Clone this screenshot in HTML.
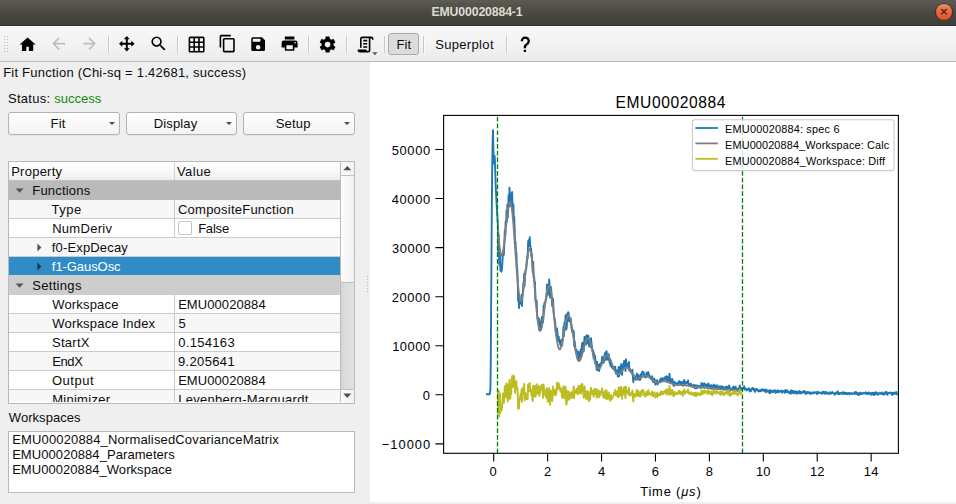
<!DOCTYPE html><html><head><meta charset="utf-8"><title>EMU00020884-1</title><style>
html,body{margin:0;padding:0;}
body{width:956px;height:504px;overflow:hidden;background:#efefef;font-family:"Liberation Sans",sans-serif;position:relative;}
.abs,.t,.ic,.sep{position:absolute;}
.t{white-space:nowrap;line-height:1;}
.t i{font-style:italic;}
#titlebar{left:0;top:0;width:956px;height:25px;background:linear-gradient(#5d5b52,#4b4a44 45%,#3f3e3a);border-bottom:1px solid #33322f;}
#toolbar{left:0;top:26px;width:956px;height:34px;background:linear-gradient(#f7f7f7,#f3f3f3 50%,#ebebeb);border-top:1px solid #ffffff;border-bottom:1px solid #bbbbbb;}
.sep{top:36px;width:1px;height:17px;background:#c9c9c9;box-shadow:1px 0 0 #fafafa;}
#canvas{left:370px;top:62px;width:586px;height:440px;background:#fff;}
.btn{height:21px;border:1px solid #b4b4b4;border-radius:3px;background:linear-gradient(#ffffff,#f3f3f3);box-shadow:0 1px 0 rgba(0,0,0,0.04);}
.darr{width:0;height:0;border-left:3px solid transparent;border-right:3px solid transparent;border-top:3.5px solid #4d4d4d;}
.row{left:9px;width:331px;height:18px;border-bottom:1px solid #cbcbcb;}
</style></head><body>
<div class="abs" id="titlebar"></div>
<div class="abs" style="left:0;top:0;width:1px;height:1px;background:#3b5168;"></div><div class="abs" style="left:955px;top:0;width:1px;height:1px;background:#6a6a66;"></div>
<div class="abs" style="left:935px;top:3px;width:18px;height:18px;border-radius:9px;background:#3a3833;"></div>
<div class="abs" style="left:936px;top:4px;width:16px;height:16px;border-radius:8px;background:linear-gradient(#f28c66,#e9653a 50%,#e0551f);"></div>
<svg class="abs" style="left:936px;top:4px" width="16" height="16" viewBox="0 0 16 16"><path d="M5.3 5.0L10.7 10.4M10.7 5.0L5.3 10.4" stroke="#3a2417" stroke-width="1.25" stroke-linecap="butt"/></svg>
<div class="abs" id="toolbar"></div>
<div class="abs" style="left:4px;top:36px;width:1px;height:17px;background:repeating-linear-gradient(to bottom,#b9b9b9 0 1px,transparent 1px 3px);"></div>
<div class="abs" style="left:7px;top:36px;width:1px;height:17px;background:repeating-linear-gradient(to bottom,#b9b9b9 0 1px,transparent 1px 3px);"></div>
<svg class="ic" style="left:17.60px;top:34.50px" width="19.2" height="19.2" viewBox="0 0 24 24"><path fill="#000" d="M10.4,20V14.6H13.6V20H19V12H22L12,3L2,12H5V20H10.4Z"/></svg>
<svg class="ic" style="left:48.60px;top:34.30px" width="19.2" height="19.2" viewBox="0 0 24 24"><path fill="#bdbdbd" d="M20,11V13H8L13.5,18.5L12.08,19.92L4.16,12L12.08,4.08L13.5,5.5L8,11H20Z"/></svg>
<svg class="ic" style="left:79.60px;top:34.30px" width="19.2" height="19.2" viewBox="0 0 24 24"><path fill="#bdbdbd" d="M4,11V13H16L10.5,18.5L11.92,19.92L19.84,12L11.92,4.08L10.5,5.5L16,11H4Z"/></svg>
<div class="sep" style="left:108.0px"></div>
<svg class="ic" style="left:119.20px;top:36.10px" width="15.6" height="15.6" viewBox="0 0 16 16"><path fill="#000" d="M8,0L11,3.4H9V7H12.6V5L16,8L12.6,11V9H9V12.6H11L8,16L5,12.6H7V9H3.4V11L0,8L3.4,5V7H7V3.4H5Z"/></svg>
<svg class="ic" style="left:148.60px;top:34.30px" width="19.2" height="19.2" viewBox="0 0 24 24"><path fill="#000" d="M9.5,3A6.5,6.5 0 0,1 16,9.5C16,11.11 15.41,12.59 14.44,13.73L14.71,14H15.5L20.5,19L19,20.5L14,15.5V14.71L13.73,14.44C12.59,15.41 11.11,16 9.5,16A6.5,6.5 0 0,1 3,9.5A6.5,6.5 0 0,1 9.5,3M9.5,5C7,5 5,7 5,9.5C5,12 7,14 9.5,14C12,14 14,12 14,9.5C14,7 12,5 9.5,5Z"/></svg>
<div class="sep" style="left:177.0px"></div>
<svg class="ic" style="left:186.60px;top:34.60px" width="19.2" height="19.2" viewBox="0 0 24 24"><path fill="#000" d="M10,4V8H14V4H10M16,4V8H20V4H16M16,10V14H20V10H16M16,16V20H20V16H16M14,20V16H10V20H14M8,20V16H4V20H8M8,14V10H4V14H8M8,8V4H4V8H8M10,14H14V10H10V14M4,2H20A2,2 0 0,1 22,4V20A2,2 0 0,1 20,22H4C2.92,22 2,21.1 2,20V4A2,2 0 0,1 4,2Z"/></svg>
<svg class="ic" style="left:217.60px;top:34.30px" width="19.2" height="19.2" viewBox="0 0 24 24"><path fill="#000" d="M19,21H8V7H19M19,5H8A2,2 0 0,0 6,7V21A2,2 0 0,0 8,23H19A2,2 0 0,0 21,21V7A2,2 0 0,0 19,5M16,1H4A2,2 0 0,0 2,3V17H4V3H16V1Z"/></svg>
<svg class="ic" style="left:249.05px;top:35.25px" width="18.3" height="18.3" viewBox="0 0 24 24"><path fill="#000" d="M15,9H5V5H15M12,19A3,3 0 0,1 9,16A3,3 0 0,1 12,13A3,3 0 0,1 15,16A3,3 0 0,1 12,19M17,3H5C3.89,3 3,3.9 3,5V19A2,2 0 0,0 5,21H19A2,2 0 0,0 21,19V7L17,3Z"/></svg>
<svg class="ic" style="left:279.60px;top:34.40px" width="19.2" height="19.2" viewBox="0 0 24 24"><path fill="#000" d="M18,3H6V7H18M19,12A1,1 0 0,1 18,11A1,1 0 0,1 19,10A1,1 0 0,1 20,11A1,1 0 0,1 19,12M16,19H8V14H16M19,8H5A3,3 0 0,0 2,11V17H6V21H18V17H22V11A3,3 0 0,0 19,8Z"/></svg>
<div class="sep" style="left:308.0px"></div>
<svg class="ic" style="left:317.60px;top:34.50px" width="19.2" height="19.2" viewBox="0 0 24 24"><path fill="#000" d="M12,15.5A3.5,3.5 0 0,1 8.5,12A3.5,3.5 0 0,1 12,8.5A3.5,3.5 0 0,1 15.5,12A3.5,3.5 0 0,1 12,15.5M19.43,12.97C19.47,12.65 19.5,12.33 19.5,12C19.5,11.67 19.47,11.34 19.43,11L21.54,9.37C21.73,9.22 21.78,8.95 21.66,8.73L19.66,5.27C19.54,5.05 19.27,4.96 19.05,5.05L16.56,6.05C16.04,5.66 15.5,5.32 14.87,5.07L14.5,2.42C14.46,2.18 14.25,2 14,2H10C9.75,2 9.54,2.18 9.5,2.42L9.13,5.07C8.5,5.32 7.96,5.66 7.44,6.05L4.95,5.05C4.73,4.96 4.46,5.05 4.34,5.27L2.34,8.73C2.21,8.95 2.27,9.22 2.46,9.37L4.57,11C4.53,11.34 4.5,11.67 4.5,12C4.5,12.33 4.53,12.65 4.57,12.97L2.46,14.63C2.27,14.78 2.21,15.05 2.34,15.27L4.34,18.73C4.46,18.95 4.73,19.03 4.95,18.95L7.44,17.94C7.96,18.34 8.5,18.68 9.13,18.93L9.5,21.58C9.54,21.82 9.75,22 10,22H14C14.25,22 14.46,21.82 14.5,21.58L14.87,18.93C15.5,18.67 16.04,18.34 16.56,17.94L19.05,18.95C19.27,19.03 19.54,18.95 19.66,18.73L21.66,15.27C21.78,15.05 21.73,14.78 21.54,14.63L19.43,12.97Z"/></svg>
<div class="sep" style="left:346.0px"></div>
<svg class="ic" style="left:355.60px;top:34.60px" width="19.2" height="19.2" viewBox="0 0 24 24"><path fill="#000" d="M15,20A1,1 0 0,0 16,19V4H8A1,1 0 0,0 7,5V16H5V5A3,3 0 0,1 8,2H19A3,3 0 0,1 22,5V6H20V5A1,1 0 0,0 19,4A1,1 0 0,0 18,5V9L18,19A3,3 0 0,1 15,22H5A3,3 0 0,1 2,19V18H13A2,2 0 0,0 15,20M9,6H14V8H9V6M9,10H14V12H9V10M9,14H14V16H9V14Z"/></svg>
<svg class="abs" style="left:372px;top:52px" width="6" height="4" viewBox="0 0 6 4"><path d="M0.2 0.3H5.6L2.9 3.3Z" fill="#5a5a5a"/></svg>
<div class="sep" style="left:384.0px"></div>
<div class="abs" style="left:388px;top:33px;width:29px;height:20px;border:1px solid #aaaaaa;border-radius:3px;background:#dcdcdc;"></div>
<div class="sep" style="left:423.0px"></div>
<div class="sep" style="left:506.0px"></div>
<svg class="ic" style="left:515.80px;top:34.90px" width="18.6" height="18.6" viewBox="0 0 24 24"><path fill="#000" d="M10,19H13V22H10V19M12,2C17.35,2.22 19.68,7.62 16.5,11.67C15.67,12.67 14.33,13.33 13.67,14.17C13,15 13,16 13,17H10C10,15.33 10,13.92 10.67,12.92C11.33,11.92 12.67,11.33 13.5,10.67C15.92,8.43 15.32,5.26 12,5A3,3 0 0,0 9,8H6A6,6 0 0,1 12,2Z"/></svg>
<div class="abs" id="canvas"></div>
<div class="abs" style="left:367px;top:276px;width:1px;height:17px;background:repeating-linear-gradient(to bottom,#bdbdbd 0 1px,transparent 1px 3px);"></div>
<div class="abs btn" style="left:8px;top:112px;width:110px;"></div>
<div class="abs darr" style="left:109.3px;top:121.5px;"></div>
<div class="abs btn" style="left:126px;top:112px;width:109px;"></div>
<div class="abs darr" style="left:225.8px;top:121.5px;"></div>
<div class="abs btn" style="left:243px;top:112px;width:110px;"></div>
<div class="abs darr" style="left:343.9px;top:121.5px;"></div>
<div class="abs" style="left:8px;top:161px;width:345px;height:241px;border:1px solid #b9b9b9;background:#fff;"></div>
<div class="abs" style="left:9px;top:162px;width:331px;height:18px;background:linear-gradient(#ffffff,#f9f9f9 50%,#eeeeee);border-bottom:1px solid #c2c2c2;"></div>
<div class="abs" style="left:174px;top:162px;width:1px;height:18px;background:#d3d3d3;"></div>
<div class="abs row" style="top:181px;background:#bababa;height:18px;border-bottom-color:#bababa;"></div>
<div class="abs row" style="top:200px;background:#f7f7f7;height:18px;"></div>
<div class="abs" style="left:174px;top:200px;width:1px;height:18px;background:#cbcbcb;"></div>
<div class="abs row" style="top:219px;background:#ffffff;height:18px;"></div>
<div class="abs" style="left:174px;top:219px;width:1px;height:18px;background:#cbcbcb;"></div>
<div class="abs row" style="top:238px;background:#f7f7f7;height:18px;"></div>
<div class="abs row" style="top:257px;background:#308cc6;height:18px;border-bottom-color:#cdcdcd;"></div>
<div class="abs row" style="top:276px;background:#cdcdcd;height:18px;border-bottom-color:#cdcdcd;"></div>
<div class="abs row" style="top:295px;background:#ffffff;height:18px;"></div>
<div class="abs" style="left:174px;top:295px;width:1px;height:18px;background:#cbcbcb;"></div>
<div class="abs row" style="top:314px;background:#f7f7f7;height:18px;"></div>
<div class="abs" style="left:174px;top:314px;width:1px;height:18px;background:#cbcbcb;"></div>
<div class="abs row" style="top:333px;background:#ffffff;height:18px;"></div>
<div class="abs" style="left:174px;top:333px;width:1px;height:18px;background:#cbcbcb;"></div>
<div class="abs row" style="top:352px;background:#f7f7f7;height:18px;"></div>
<div class="abs" style="left:174px;top:352px;width:1px;height:18px;background:#cbcbcb;"></div>
<div class="abs row" style="top:371px;background:#ffffff;height:18px;"></div>
<div class="abs" style="left:174px;top:371px;width:1px;height:18px;background:#cbcbcb;"></div>
<div class="abs row" style="top:390px;background:#f7f7f7;height:12px;border-bottom:none;"></div>
<div class="abs" style="left:174px;top:390px;width:1px;height:12px;background:#cbcbcb;"></div>
<svg class="abs" style="left:15px;top:187px" width="10" height="8" viewBox="0 0 10 8"><path d="M0.6 1.4H8.6L4.6 5.8Z" fill="#555"/></svg>
<svg class="abs" style="left:15px;top:282px" width="10" height="8" viewBox="0 0 10 8"><path d="M0.6 1.4H8.6L4.6 5.8Z" fill="#555"/></svg>
<svg class="abs" style="left:36px;top:243px" width="8" height="10" viewBox="0 0 8 10"><path d="M1.4 0.5V8.5L5.4 4.5Z" fill="#555"/></svg>
<svg class="abs" style="left:36px;top:262px" width="8" height="10" viewBox="0 0 8 10"><path d="M1.4 0.5V8.5L5.4 4.5Z" fill="#1e3548"/></svg>
<div class="abs" style="left:178px;top:221px;width:12px;height:12px;border:1px solid #c3c3c3;border-radius:2px;background:#fff;"></div>
<div class="abs" style="left:340px;top:162px;width:1px;height:240px;background:#bdbdbd;"></div>
<div class="abs" style="left:341px;top:162px;width:13px;height:13px;background:linear-gradient(to right,#fafafa,#f2f2f2);border-bottom:1px solid #c0c0c0;"></div>
<div class="abs" style="left:341px;top:176px;width:13px;height:106px;background:linear-gradient(to right,#fdfdfd,#f1f1f1);border-bottom:1px solid #bdbdbd;"></div>
<div class="abs" style="left:341px;top:283px;width:13px;height:106px;background:linear-gradient(to right,#d2d2d2,#dedede 30%,#e0e0e0);"></div>
<div class="abs" style="left:341px;top:389px;width:13px;height:13px;background:linear-gradient(to right,#fafafa,#f2f2f2);border-top:1px solid #c0c0c0;"></div>
<svg class="abs" style="left:343px;top:165px" width="9" height="6" viewBox="0 0 9 6"><path d="M0.3 5.2H8.3L4.3 0.9Z" fill="#505050"/></svg>
<svg class="abs" style="left:343px;top:393px" width="9" height="6" viewBox="0 0 9 6"><path d="M0.3 0.6H8.3L4.3 4.9Z" fill="#505050"/></svg>
<div class="abs" style="left:8px;top:431px;width:345px;height:60px;border:1px solid #b9b9b9;background:#fff;"></div>
<svg class="abs" style="left:370px;top:62px" width="586" height="440" viewBox="370 62 586 440">
<defs><clipPath id="ax"><rect x="443.6" y="115.4" width="454.8" height="337.9"/></clipPath></defs>
<g clip-path="url(#ax)" fill="none" stroke-linejoin="round">
<path d="M486.0 394.3 L489.6 394.2 L490.4 390.0 L490.8 360.0 L491.1 310.0 L491.6 240.0 L492.1 175.0 L492.6 142.0 L493.0 130.1 L493.4 150.0 L493.7 163.5 L493.9 156.0 L494.3 155.3 L494.8 157.2 L495.2 170.0 L495.7 186.0 L496.4 200.0 L497.1 213.0 L497.9 224.9 L498.3 252.2 L498.7 234.4 L499.2 264.7 L499.6 259.2 L500.0 249.3 L500.4 270.5 L500.9 268.2 L501.3 271.5 L501.7 270.6 L502.2 265.6 L502.6 259.1 L503.0 250.6 L503.5 255.2 L503.9 254.5 L504.3 244.1 L504.8 230.5 L505.2 236.7 L505.6 221.4 L506.1 225.2 L506.5 210.4 L506.9 221.4 L507.3 204.7 L507.8 217.6 L508.2 210.4 L508.6 194.9 L509.1 204.0 L509.5 187.6 L509.9 206.2 L510.4 205.7 L510.8 194.4 L511.2 204.0 L511.7 192.5 L512.1 192.0 L512.5 206.3 L513.0 211.1 L513.4 204.4 L513.8 219.3 L514.2 216.6 L514.7 230.5 L515.1 245.3 L515.5 241.5 L516.0 252.1 L516.4 252.1 L516.8 265.2 L517.3 269.8 L517.7 279.7 L518.1 300.8 L518.6 295.0 L519.0 308.0 L519.4 301.5 L519.9 304.2 L520.3 301.6 L520.7 300.2 L521.1 301.5 L521.6 294.8 L522.0 306.0 L522.4 295.0 L522.9 292.9 L523.3 283.5 L523.7 285.0 L524.2 273.6 L524.6 285.9 L525.0 276.5 L525.5 270.5 L525.9 269.8 L526.3 268.7 L526.8 262.8 L527.2 257.1 L527.6 259.0 L528.1 242.2 L528.5 240.2 L528.9 246.0 L529.3 243.4 L529.8 237.1 L530.2 244.9 L530.6 247.9 L531.1 248.5 L531.5 256.4 L531.9 253.7 L532.4 267.0 L532.8 272.8 L533.2 262.0 L533.7 277.3 L534.1 276.3 L534.5 281.1 L535.0 282.6 L535.4 298.5 L535.8 302.5 L536.2 304.4 L536.7 300.7 L537.1 314.2 L537.5 318.1 L538.0 317.9 L538.4 322.7 L538.8 318.5 L539.3 330.4 L539.7 322.2 L540.1 329.0 L540.6 325.8 L541.0 323.2 L541.4 319.8 L541.9 316.9 L542.3 318.7 L542.7 317.3 L543.1 322.1 L543.6 305.8 L544.0 307.2 L544.4 303.1 L544.9 302.7 L545.3 302.9 L545.7 300.1 L546.2 298.8 L546.6 296.6 L547.0 284.4 L547.5 293.3 L547.9 294.9 L548.3 288.0 L548.8 288.5 L549.2 279.5 L549.6 286.5 L550.1 297.6 L550.5 287.3 L550.9 286.9 L551.3 290.7 L551.8 299.2 L552.2 306.0 L552.6 305.4 L553.1 298.7 L553.5 309.0 L553.9 314.9 L554.4 318.5 L554.8 319.3 L555.2 322.1 L555.7 331.6 L556.1 333.2 L556.5 335.8 L557.0 328.5 L557.4 332.3 L557.8 336.6 L558.2 341.1 L558.7 336.7 L559.1 340.1 L559.5 340.2 L560.0 343.8 L560.4 345.0 L560.8 344.6 L561.3 340.0 L561.7 344.4 L562.1 345.6 L562.6 339.2 L563.0 337.2 L563.4 327.0 L563.9 336.2 L564.3 322.9 L564.7 330.5 L565.1 323.6 L565.6 315.1 L566.0 326.8 L566.4 329.3 L566.9 325.5 L567.3 313.4 L567.7 316.5 L568.2 312.1 L568.6 313.0 L569.0 321.1 L569.5 318.1 L569.9 321.6 L570.3 319.7 L570.8 318.5 L571.2 324.9 L571.6 328.6 L572.1 331.2 L572.5 332.5 L572.9 330.1 L573.3 334.1 L573.8 331.1 L574.2 345.9 L574.6 340.9 L575.1 345.3 L575.5 348.4 L575.9 351.0 L576.4 349.9 L576.8 350.4 L577.2 353.1 L577.7 358.8 L578.1 359.6 L578.5 351.9 L579.0 359.4 L579.4 356.5 L579.8 354.9 L580.2 352.4 L580.7 349.5 L581.1 356.6 L581.5 350.3 L582.0 344.2 L582.4 342.6 L582.8 345.8 L583.3 347.5 L583.7 351.2 L584.1 343.0 L584.6 336.7 L585.0 344.1 L585.4 341.2 L585.9 344.8 L586.3 339.2 L586.7 335.3 L587.1 342.7 L587.6 341.4 L588.0 343.2 L588.4 335.7 L588.9 345.7 L589.3 339.4 L589.7 344.7 L590.2 347.0 L590.6 339.1 L591.0 338.2 L591.5 343.5 L591.9 345.8 L592.3 349.9 L592.8 352.2 L593.2 350.4 L593.6 358.4 L594.0 353.2 L594.5 359.0 L594.9 355.4 L595.3 358.5 L595.8 364.2 L596.2 361.8 L596.6 369.6 L597.1 361.9 L597.5 370.2 L597.9 365.5 L598.4 368.4 L598.8 364.8 L599.2 371.0 L599.7 364.3 L600.1 367.9 L600.5 363.8 L601.0 362.9 L601.4 362.8 L601.8 360.6 L602.2 356.6 L602.7 363.1 L603.1 359.5 L603.5 362.7 L604.0 362.2 L604.4 355.6 L604.8 354.7 L605.3 352.5 L605.7 359.8 L606.1 359.8 L606.6 351.2 L607.0 359.6 L607.4 355.1 L607.9 354.4 L608.3 359.5 L608.7 354.2 L609.1 358.0 L609.6 362.8 L610.0 360.5 L610.4 365.7 L610.9 361.0 L611.3 364.8 L611.7 367.3 L612.2 367.7 L612.6 367.6 L613.0 368.7 L613.5 368.3 L613.9 366.9 L614.3 367.4 L614.8 370.3 L615.2 366.7 L615.6 371.7 L616.0 373.7 L616.5 373.0 L616.9 370.5 L617.3 371.6 L617.8 376.6 L618.2 375.3 L618.6 366.9 L619.1 376.1 L619.5 366.9 L619.9 373.5 L620.4 373.5 L620.8 368.8 L621.2 364.1 L621.7 370.1 L622.1 374.9 L622.5 365.2 L623.0 369.8 L623.4 363.1 L623.8 364.7 L624.2 360.7 L624.7 366.9 L625.1 367.5 L625.5 371.0 L626.0 359.3 L626.4 365.0 L626.8 363.3 L627.3 364.0 L627.7 366.7 L628.1 366.4 L628.6 365.0 L629.0 362.0 L629.4 370.4 L629.9 368.7 L630.3 370.5 L630.7 371.9 L631.1 370.8 L631.6 370.8 L632.0 373.3 L632.4 369.7 L632.9 377.4 L633.3 382.0 L633.7 374.9 L634.2 376.4 L634.6 376.5 L635.0 376.8 L635.5 379.8 L635.9 379.4 L636.3 376.8 L636.8 373.4 L637.2 378.6 L637.6 379.4 L638.0 377.3 L638.5 374.9 L638.9 379.7 L639.3 377.7 L639.8 377.3 L640.2 379.8 L640.6 375.1 L641.1 373.9 L641.5 377.9 L641.9 373.7 L642.4 371.5 L642.8 372.1 L643.2 372.2 L643.7 372.4 L644.1 376.3 L644.5 374.6 L644.9 377.4 L645.4 375.6 L645.8 377.4 L646.2 374.9 L646.7 372.5 L647.1 375.1 L647.5 374.6 L648.0 376.9 L648.4 372.3 L648.8 375.0 L649.3 375.2 L649.7 376.6 L650.1 376.9 L650.6 377.9 L651.0 379.3 L651.4 378.6 L651.9 376.1 L652.3 379.6 L652.7 378.0 L653.1 382.2 L653.6 380.4 L654.0 380.7 L654.4 378.8 L654.9 380.9 L655.3 384.5 L655.7 382.1 L656.2 382.9 L656.6 382.6 L657.0 380.2 L657.5 384.6 L657.9 381.9 L658.3 381.8 L658.8 381.4 L659.2 382.4 L659.6 381.1 L660.0 379.9 L660.5 382.2 L660.9 378.7 L661.3 378.3 L661.8 379.9 L662.2 381.1 L662.6 378.2 L663.1 378.6 L663.5 380.5 L663.9 379.6 L664.4 378.6 L664.8 377.4 L665.2 379.1 L665.7 376.8 L666.1 379.1 L666.5 381.5 L666.9 376.2 L667.4 379.5 L667.8 377.2 L668.2 380.9 L668.7 377.2 L669.1 382.3 L669.5 373.8 L670.0 377.9 L670.4 380.1 L670.8 383.0 L671.3 383.0 L671.7 379.6 L672.1 378.9 L672.6 379.9 L673.0 384.6 L673.4 382.6 L673.9 386.1 L674.3 383.2 L674.7 381.8 L675.1 382.7 L675.6 384.3 L676.0 384.3 L676.4 383.4 L676.9 384.6 L677.3 383.5 L677.7 382.8 L678.2 383.8 L678.6 382.3 L679.0 380.9 L679.5 383.0 L679.9 383.2 L680.3 384.8 L680.8 381.8 L681.2 383.7 L681.6 383.3 L682.0 383.7 L682.5 382.3 L682.9 385.9 L683.3 382.4 L683.8 380.6 L684.2 379.9 L684.6 383.0 L685.1 384.2 L685.5 382.5 L685.9 382.1 L686.4 382.7 L686.8 381.9 L687.2 383.1 L687.7 381.7 L688.1 380.4 L688.5 384.8 L688.9 383.8 L689.4 384.0 L689.8 384.0 L690.2 384.4 L690.7 386.1 L691.1 383.8 L691.5 384.7 L692.0 385.7 L692.4 386.1 L692.8 386.9 L693.3 386.1 L693.7 384.8 L694.1 386.4 L694.6 388.1 L695.0 385.2 L695.4 388.3 L695.9 388.0 L696.3 386.6 L696.7 388.4 L697.1 385.3 L697.6 386.8 L698.0 386.0 L698.4 387.4 L698.9 387.1 L699.3 385.9 L699.7 387.5 L700.2 387.3 L700.6 387.8 L701.0 386.5 L701.5 383.0 L701.9 386.7 L702.3 385.8 L702.8 385.0 L703.2 383.6 L703.6 386.7 L704.0 385.9 L704.5 383.4 L704.9 385.8 L705.3 384.3 L705.8 385.0 L706.2 385.7 L706.6 384.4 L707.1 386.1 L707.5 387.2 L707.9 384.8 L708.4 383.4 L708.8 386.4 L709.2 385.0 L709.7 385.7 L710.1 386.2 L710.5 387.9 L710.9 385.8 L711.4 385.2 L711.8 385.3 L712.2 389.0 L712.7 388.7 L713.1 387.0 L713.5 386.0 L714.0 384.6 L714.4 386.9 L714.8 385.3 L715.3 386.9 L715.7 387.8 L716.1 386.1 L716.6 387.4 L717.0 385.2 L717.4 385.9 L717.8 386.3 L718.3 387.1 L718.7 387.8 L719.1 386.5 L719.6 386.5 L720.0 387.5 L720.4 389.3 L720.9 386.1 L721.3 388.9 L721.7 387.6 L722.2 388.1 L722.6 386.4 L723.0 389.1 L723.5 387.2 L723.9 387.6 L724.3 389.8 L724.8 388.8 L725.2 388.7 L725.6 387.0 L726.0 387.1 L726.5 386.6 L726.9 388.0 L727.3 388.6 L727.8 386.8 L728.2 389.6 L728.6 387.2 L729.1 385.5 L729.5 386.9 L729.9 391.0 L730.4 389.4 L730.8 388.7 L731.2 388.8 L731.7 389.9 L732.1 389.3 L732.5 387.6 L732.9 388.9 L733.4 386.5 L733.8 387.2 L734.2 388.9 L734.7 389.0 L735.1 388.3 L735.5 386.7 L736.0 388.2 L736.4 389.4 L736.8 389.0 L737.3 389.1 L737.7 391.1 L738.1 389.7 L738.6 388.4 L739.0 388.2 L739.4 387.7 L739.8 385.4 L740.3 388.8 L740.7 389.9 L741.1 388.6 L741.6 389.6 L742.0 388.0 L742.4 388.3 L742.9 387.6 L743.3 387.6 L743.7 388.6 L744.2 386.1 L744.6 389.5 L745.0 388.2 L745.5 388.9 L745.9 388.8 L746.3 389.8 L746.8 390.6 L747.2 389.2 L747.6 389.8 L748.0 389.2 L748.5 388.7 L748.9 388.2 L749.3 388.8 L749.8 391.6 L750.2 389.5 L750.6 390.1 L751.1 391.0 L751.5 389.1 L751.9 389.4 L752.4 388.0 L752.8 387.9 L753.2 389.3 L753.7 389.3 L754.1 390.3 L754.5 388.9 L754.9 391.9 L755.4 390.3 L755.8 389.2 L756.2 390.1 L756.7 389.9 L757.1 389.1 L757.5 390.3 L758.0 390.9 L758.4 391.5 L758.8 390.1 L759.3 391.3 L759.7 390.5 L760.1 390.9 L760.6 391.3 L761.0 389.8 L761.4 390.8 L761.8 390.0 L762.3 389.2 L762.7 389.5 L763.1 390.8 L763.6 390.4 L764.0 389.6 L764.4 390.2 L764.9 391.1 L765.3 390.0 L765.7 392.4 L766.2 390.4 L766.6 389.6 L767.0 390.7 L767.5 391.0 L767.9 391.6 L768.3 391.8 L768.8 391.4 L769.2 390.2 L769.6 393.4 L770.0 393.4 L770.5 390.4 L770.9 391.2 L771.3 390.4 L771.8 392.1 L772.2 391.1 L772.6 391.1 L773.1 392.1 L773.5 390.7 L773.9 390.9 L774.4 390.8 L774.8 390.0 L775.2 392.3 L775.7 393.1 L776.1 392.0 L776.5 391.0 L776.9 391.3 L777.4 392.1 L777.8 390.2 L778.2 391.4 L778.7 392.3 L779.1 390.8 L779.5 391.4 L780.0 391.1 L780.4 391.4 L780.8 391.0 L781.3 390.6 L781.7 392.0 L782.1 392.7 L782.6 392.0 L783.0 391.1 L783.4 391.3 L783.8 390.7 L784.3 391.1 L784.7 392.8 L785.1 390.4 L785.6 389.9 L786.0 392.2 L786.4 392.1 L786.9 390.5 L787.3 390.3 L787.7 392.3 L788.2 392.2 L788.6 391.9 L789.0 392.9 L789.5 393.2 L789.9 392.1 L790.3 393.2 L790.7 390.7 L791.2 393.6 L791.6 390.4 L792.0 392.2 L792.5 391.2 L792.9 391.5 L793.3 393.4 L793.8 391.0 L794.2 393.4 L794.6 392.7 L795.1 392.0 L795.5 392.6 L795.9 391.3 L796.4 393.6 L796.8 393.7 L797.2 391.6 L797.7 392.5 L798.1 393.2 L798.5 392.9 L798.9 392.2 L799.4 390.9 L799.8 393.3 L800.2 391.7 L800.7 392.6 L801.1 393.3 L801.5 392.0 L802.0 392.1 L802.4 392.7 L802.8 392.6 L803.3 391.4 L803.7 392.5 L804.1 390.9 L804.6 391.0 L805.0 393.1 L805.4 392.4 L805.8 394.1 L806.3 392.8 L806.7 392.1 L807.1 391.9 L807.6 393.2 L808.0 392.3 L808.4 393.1 L808.9 392.9 L809.3 392.0 L809.7 392.6 L810.2 394.0 L810.6 393.4 L811.0 393.4 L811.5 392.4 L811.9 393.5 L812.3 392.7 L812.7 393.0 L813.2 393.3 L813.6 392.3 L814.0 392.8 L814.5 392.3 L814.9 393.0 L815.3 392.5 L815.8 392.5 L816.2 392.2 L816.6 392.9 L817.1 394.1 L817.5 391.8 L817.9 392.0 L818.4 392.2 L818.8 392.9 L819.2 393.2 L819.7 392.6 L820.1 392.8 L820.5 392.7 L820.9 392.8 L821.4 392.6 L821.8 393.9 L822.2 393.4 L822.7 392.7 L823.1 391.6 L823.5 392.7 L824.0 392.9 L824.4 393.7 L824.8 392.0 L825.3 392.7 L825.7 392.1 L826.1 393.8 L826.6 392.3 L827.0 392.5 L827.4 393.0 L827.8 393.6 L828.3 393.7 L828.7 393.8 L829.1 393.9 L829.6 392.1 L830.0 393.7 L830.4 393.1 L830.9 392.7 L831.3 393.6 L831.7 393.3 L832.2 392.0 L832.6 392.8 L833.0 393.0 L833.5 392.8 L833.9 393.0 L834.3 393.6 L834.7 394.9 L835.2 393.7 L835.6 393.9 L836.0 392.4 L836.5 393.0 L836.9 393.2 L837.3 392.8 L837.8 391.3 L838.2 394.1 L838.6 393.5 L839.1 393.0 L839.5 394.0 L839.9 393.1 L840.4 392.9 L840.8 393.6 L841.2 393.7 L841.7 393.5 L842.1 392.4 L842.5 393.1 L842.9 393.9 L843.4 393.5 L843.8 392.1 L844.2 393.6 L844.7 394.1 L845.1 393.0 L845.5 393.2 L846.0 393.7 L846.4 392.8 L846.8 393.3 L847.3 394.3 L847.7 393.2 L848.1 393.2 L848.6 392.9 L849.0 393.1 L849.4 394.5 L849.8 393.7 L850.3 393.4 L850.7 393.2 L851.1 393.9 L851.6 393.8 L852.0 393.0 L852.4 394.0 L852.9 393.7 L853.3 393.6 L853.7 393.3 L854.2 393.7 L854.6 393.7 L855.0 392.0 L855.5 393.6 L855.9 393.9 L856.3 392.1 L856.7 393.8 L857.2 392.9 L857.6 394.8 L858.0 394.0 L858.5 393.2 L858.9 395.1 L859.3 393.6 L859.8 393.1 L860.2 392.5 L860.6 394.3 L861.1 392.9 L861.5 393.6 L861.9 394.1 L862.4 393.7 L862.8 393.2 L863.2 392.8 L863.6 393.0 L864.1 393.6 L864.5 393.3 L864.9 392.9 L865.4 393.4 L865.8 392.2 L866.2 392.9 L866.7 393.2 L867.1 394.2 L867.5 393.0 L868.0 394.1 L868.4 392.5 L868.8 393.7 L869.3 393.0 L869.7 393.2 L870.1 392.8 L870.6 394.6 L871.0 393.7 L871.4 393.2 L871.8 394.7 L872.3 393.1 L872.7 392.7 L873.1 393.6 L873.6 394.1 L874.0 395.1 L874.4 392.5 L874.9 393.1 L875.3 394.3 L875.7 393.8 L876.2 392.2 L876.6 393.9 L877.0 394.0 L877.5 393.0 L877.9 394.9 L878.3 393.8 L878.7 394.0 L879.2 393.2 L879.6 393.6 L880.0 392.6 L880.5 393.6 L880.9 393.7 L881.3 394.0 L881.8 394.2 L882.2 392.4 L882.6 393.5 L883.1 393.6 L883.5 394.6 L883.9 394.0 L884.4 392.9 L884.8 394.3 L885.2 392.3 L885.6 393.1 L886.1 393.2 L886.5 391.8 L886.9 392.9 L887.4 394.9 L887.8 393.4 L888.2 393.4 L888.7 393.0 L889.1 393.0 L889.5 392.7 L890.0 392.5 L890.4 392.9 L890.8 393.5 L891.3 392.8 L891.7 393.0 L892.1 395.1 L892.6 392.8 L893.0 393.6 L893.4 394.1 L893.8 393.2 L894.3 392.4 L894.7 393.9 L895.1 393.7 L895.6 393.8 L896.0 392.4 L896.4 392.1 L896.9 394.2 L897.3 394.3 L897.7 393.6" stroke="#1f77b4" stroke-width="1.9"/>
<path d="M497.9 227.4 L498.7 238.4 L499.6 247.0 L500.4 252.8 L501.3 255.5 L502.2 255.1 L503.0 251.9 L503.9 246.3 L504.8 239.0 L505.6 230.6 L506.5 222.1 L507.3 214.3 L508.2 207.9 L509.1 203.7 L509.9 202.0 L510.8 203.3 L511.7 207.5 L512.5 214.5 L513.4 223.8 L514.2 234.9 L515.1 247.1 L516.0 259.6 L516.8 271.5 L517.7 282.1 L518.6 290.8 L519.4 297.0 L520.3 300.5 L521.1 301.1 L522.0 299.0 L522.9 294.4 L523.7 288.0 L524.6 280.4 L525.5 272.3 L526.3 264.5 L527.2 257.6 L528.1 252.5 L528.9 249.4 L529.8 248.9 L530.6 251.0 L531.5 255.6 L532.4 262.4 L533.2 271.1 L534.1 281.0 L535.0 291.4 L535.8 301.7 L536.7 311.2 L537.5 319.2 L538.4 325.4 L539.3 329.3 L540.1 330.8 L541.0 329.9 L541.9 326.9 L542.7 322.1 L543.6 316.1 L544.4 309.4 L545.3 302.6 L546.2 296.4 L547.0 291.3 L547.9 287.8 L548.8 286.2 L549.6 286.7 L550.5 289.2 L551.3 293.7 L552.2 299.8 L553.1 307.1 L553.9 315.1 L554.8 323.2 L555.7 330.9 L556.5 337.7 L557.4 343.2 L558.2 347.0 L559.1 349.1 L560.0 349.3 L560.8 347.7 L561.7 344.7 L562.6 340.5 L563.4 335.6 L564.3 330.5 L565.1 325.5 L566.0 321.3 L566.9 318.0 L567.7 316.1 L568.6 315.7 L569.5 316.8 L570.3 319.4 L571.2 323.3 L572.1 328.1 L572.9 333.7 L573.8 339.5 L574.6 345.2 L575.5 350.4 L576.4 354.8 L577.2 358.2 L578.1 360.3 L579.0 361.1 L579.8 360.6 L580.7 359.0 L581.5 356.6 L582.4 353.4 L583.3 350.0 L584.1 346.6 L585.0 343.5 L585.9 340.9 L586.7 339.2 L587.6 338.5 L588.4 338.8 L589.3 340.0 L590.2 342.2 L591.0 345.2 L591.9 348.7 L592.8 352.5 L593.6 356.4 L594.5 360.0 L595.3 363.2 L596.2 365.8 L597.1 367.6 L597.9 368.6 L598.8 368.8 L599.7 368.2 L600.5 366.9 L601.4 365.2 L602.2 363.2 L603.1 361.1 L604.0 359.1 L604.8 357.5 L605.7 356.2 L606.6 355.5 L607.4 355.4 L608.3 356.0 L609.1 357.1 L610.0 358.8 L610.9 360.8 L611.7 363.1 L612.6 365.4 L613.5 367.8 L614.3 369.9 L615.2 371.6 L616.0 373.0 L616.9 373.9 L617.8 374.3 L618.6 374.3 L619.5 373.8 L620.4 373.0 L621.2 372.0 L622.1 370.9 L623.0 369.9 L623.8 368.9 L624.7 368.1 L625.5 367.6 L626.4 367.5 L627.3 367.7 L628.1 368.3 L629.0 369.1 L629.9 370.2 L630.7 371.4 L631.6 372.8 L632.4 374.1 L633.3 375.4 L634.2 376.5 L635.0 377.4 L635.9 378.1 L636.8 378.5 L637.6 378.7 L638.5 378.6 L639.3 378.4 L640.2 378.0 L641.1 377.5 L641.9 377.0 L642.8 376.5 L643.7 376.1 L644.5 375.9 L645.4 375.8 L646.2 375.9 L647.1 376.1 L648.0 376.5 L648.8 377.1 L649.7 377.7 L650.6 378.4 L651.4 379.2 L652.3 379.9 L653.1 380.6 L654.0 381.1 L654.9 381.6 L655.7 381.9 L656.6 382.1 L657.5 382.2 L658.3 382.2 L659.2 382.1 L660.0 381.9 L660.9 381.8 L661.8 381.6 L662.6 381.4 L663.5 381.3 L664.4 381.3 L665.2 381.4 L666.1 381.5 L666.9 381.7 L667.8 382.0 L668.7 382.3 L669.5 382.7 L670.4 383.1 L671.3 383.5 L672.1 383.9 L673.0 384.2 L673.9 384.5 L674.7 384.7 L675.6 384.9 L676.4 385.0 L677.3 385.1 L678.2 385.1 L679.0 385.1 L679.9 385.1 L680.8 385.0 L681.6 385.0 L682.5 385.0 L683.3 385.0 L684.2 385.1 L685.1 385.2 L685.9 385.3 L686.8 385.5 L687.7 385.6 L688.5 385.8 L689.4 386.0 L690.2 386.2 L691.1 386.4 L692.0 386.6 L692.8 386.8 L693.7 386.9 L694.6 387.1 L695.4 387.2 L696.3 387.2 L697.1 387.3 L698.0 387.4 L698.9 387.4 L699.7 387.4 L700.6 387.5 L701.5 387.5 L702.3 387.5 L703.2 387.6 L704.0 387.7 L704.9 387.7 L705.8 387.8 L706.6 387.9 L707.5 388.0 L708.4 388.2 L709.2 388.3 L710.1 388.4 L710.9 388.5 L711.8 388.6 L712.7 388.7 L713.5 388.8 L714.4 388.8 L715.3 388.9 L716.1 389.0 L717.0 389.0 L717.8 389.1 L718.7 389.1 L719.6 389.2 L720.4 389.2 L721.3 389.2 L722.2 389.3 L723.0 389.3 L723.9 389.4 L724.8 389.5 L725.6 389.5 L726.5 389.6 L727.3 389.7 L728.2 389.7 L729.1 389.8 L729.9 389.9 L730.8 389.9 L731.7 390.0 L732.5 390.0 L733.4 390.1 L734.2 390.1 L735.1 390.2 L736.0 390.2 L736.8 390.3 L737.7 390.3 L738.6 390.4 L739.4 390.4 L740.3 390.4 L741.1 390.5" stroke="#7f7f7f" stroke-width="1.9"/>
<path d="M497.9 392.3 L498.3 413.9 L498.7 390.8 L499.2 416.5 L499.6 407.0 L500.0 393.8 L500.4 412.5 L500.9 408.5 L501.3 410.8 L501.7 409.7 L502.2 405.2 L502.6 400.0 L503.0 393.5 L503.5 400.5 L503.9 402.9 L504.3 396.1 L504.8 386.3 L505.2 396.6 L505.6 385.5 L506.1 393.7 L506.5 383.1 L506.9 398.1 L507.3 385.2 L507.8 401.5 L508.2 397.2 L508.6 384.2 L509.1 395.1 L509.5 379.8 L509.9 398.9 L510.4 398.2 L510.8 385.9 L511.2 393.7 L511.7 379.8 L512.1 376.1 L512.5 386.6 L513.0 387.0 L513.4 375.4 L513.8 384.9 L514.2 376.5 L514.7 384.4 L515.1 392.9 L515.5 382.9 L516.0 387.4 L516.4 381.2 L516.8 388.5 L517.3 387.6 L517.7 392.3 L518.1 408.8 L518.6 398.9 L519.0 408.5 L519.4 399.2 L519.9 399.9 L520.3 395.9 L520.7 393.8 L521.1 395.2 L521.6 389.3 L522.0 401.9 L522.4 392.8 L522.9 393.3 L523.3 386.9 L523.7 391.8 L524.2 384.0 L524.6 400.3 L525.0 395.0 L525.5 393.0 L525.9 396.3 L526.3 399.0 L526.8 396.7 L527.2 394.2 L527.6 399.0 L528.1 384.5 L528.5 384.3 L528.9 391.3 L529.3 389.4 L529.8 383.0 L530.2 390.1 L530.6 391.7 L531.1 390.3 L531.5 395.7 L531.9 389.7 L532.4 399.4 L532.8 401.0 L533.2 385.7 L533.7 396.2 L534.1 390.2 L534.5 389.7 L535.0 386.0 L535.4 396.7 L535.8 395.6 L536.2 392.6 L536.7 384.3 L537.1 393.5 L537.5 393.6 L538.0 390.1 L538.4 392.1 L538.8 385.7 L539.3 395.9 L539.7 386.7 L540.1 393.0 L540.6 390.0 L541.0 388.0 L541.4 385.9 L541.9 384.8 L542.3 388.8 L542.7 389.9 L543.1 397.7 L543.6 384.5 L544.0 389.3 L544.4 388.5 L544.9 391.6 L545.3 395.2 L545.7 395.6 L546.2 397.3 L546.6 397.8 L547.0 388.0 L547.5 398.8 L547.9 401.9 L548.3 396.0 L548.8 397.1 L549.2 388.2 L549.6 394.6 L550.1 404.7 L550.5 392.9 L550.9 390.4 L551.3 391.8 L551.8 397.4 L552.2 401.0 L552.6 396.9 L553.1 386.4 L553.5 392.8 L553.9 394.6 L554.4 394.1 L554.8 390.8 L555.2 389.7 L555.7 395.4 L556.1 393.5 L556.5 392.8 L557.0 382.6 L557.4 383.9 L557.8 386.1 L558.2 388.9 L558.7 383.2 L559.1 385.9 L559.5 385.6 L560.0 389.3 L560.4 391.2 L560.8 391.7 L561.3 388.4 L561.7 394.5 L562.1 397.7 L562.6 393.5 L563.0 393.9 L563.4 386.2 L563.9 398.0 L564.3 387.2 L564.7 397.3 L565.1 392.9 L565.6 386.6 L566.0 400.4 L566.4 404.6 L566.9 402.2 L567.3 391.3 L567.7 395.2 L568.2 391.2 L568.6 392.1 L569.0 399.9 L569.5 396.1 L569.9 398.5 L570.3 395.2 L570.8 392.1 L571.2 396.5 L571.6 397.9 L572.1 397.9 L572.5 396.5 L572.9 391.2 L573.3 392.3 L573.8 386.4 L574.2 398.3 L574.6 390.5 L575.1 392.2 L575.5 392.8 L575.9 393.0 L576.4 389.9 L576.8 388.6 L577.2 389.7 L577.7 394.2 L578.1 394.1 L578.5 385.8 L579.0 393.1 L579.4 390.3 L579.8 389.1 L580.2 387.3 L580.7 385.3 L581.1 393.5 L581.5 388.6 L582.0 383.9 L582.4 383.9 L582.8 388.8 L583.3 392.3 L583.7 397.8 L584.1 391.2 L584.6 386.5 L585.0 395.4 L585.4 393.8 L585.9 398.7 L586.3 394.1 L586.7 390.9 L587.1 398.8 L587.6 397.7 L588.0 399.6 L588.4 391.7 L588.9 401.3 L589.3 394.1 L589.7 398.5 L590.2 399.5 L590.6 390.3 L591.0 387.8 L591.5 391.4 L591.9 391.9 L592.3 394.1 L592.8 394.5 L593.2 390.7 L593.6 396.8 L594.0 389.8 L594.5 393.8 L594.9 388.6 L595.3 390.1 L595.8 394.4 L596.2 390.8 L596.6 397.7 L597.1 389.1 L597.5 396.8 L597.9 391.7 L598.4 394.5 L598.8 390.9 L599.2 397.2 L599.7 391.0 L600.1 395.1 L600.5 391.7 L601.0 391.6 L601.4 392.4 L601.8 391.1 L602.2 388.2 L602.7 395.7 L603.1 393.1 L603.5 397.3 L604.0 397.8 L604.4 392.1 L604.8 392.0 L605.3 390.5 L605.7 398.4 L606.1 398.8 L606.6 390.5 L607.0 399.0 L607.4 394.5 L607.9 393.6 L608.3 398.3 L608.7 392.5 L609.1 395.6 L609.6 399.7 L610.0 396.5 L610.4 400.8 L610.9 395.0 L611.3 397.7 L611.7 399.0 L612.2 398.3 L612.6 397.0 L613.0 396.9 L613.5 395.3 L613.9 392.9 L614.3 392.4 L614.8 394.3 L615.2 389.9 L615.6 394.1 L616.0 395.5 L616.5 394.3 L616.9 391.4 L617.3 392.2 L617.8 397.1 L618.2 395.7 L618.6 387.5 L619.1 396.8 L619.5 387.8 L619.9 394.8 L620.4 395.2 L620.8 391.0 L621.2 386.8 L621.7 393.4 L622.1 398.7 L622.5 389.6 L623.0 394.8 L623.4 388.6 L623.8 390.6 L624.2 387.0 L624.7 393.6 L625.1 394.4 L625.5 398.1 L626.0 386.6 L626.4 392.3 L626.8 390.5 L627.3 391.1 L627.7 393.5 L628.1 393.0 L628.6 391.2 L629.0 387.7 L629.4 395.6 L629.9 393.3 L630.3 394.5 L630.7 395.2 L631.1 393.5 L631.6 392.9 L632.0 394.6 L632.4 390.4 L632.9 397.5 L633.3 401.4 L633.7 393.7 L634.2 394.7 L634.6 394.3 L635.0 394.2 L635.5 396.8 L635.9 396.1 L636.3 393.2 L636.8 389.7 L637.2 394.8 L637.6 395.5 L638.0 393.4 L638.5 391.1 L638.9 396.0 L639.3 394.2 L639.8 393.9 L640.2 396.7 L640.6 392.2 L641.1 391.3 L641.5 395.4 L641.9 391.5 L642.4 389.6 L642.8 390.4 L643.2 390.7 L643.7 391.1 L644.1 395.1 L644.5 393.5 L644.9 396.4 L645.4 394.6 L645.8 396.4 L646.2 393.8 L646.7 391.4 L647.1 393.8 L647.5 393.1 L648.0 395.2 L648.4 390.3 L648.8 392.8 L649.3 392.6 L649.7 393.7 L650.1 393.6 L650.6 394.2 L651.0 395.3 L651.4 394.3 L651.9 391.4 L652.3 394.6 L652.7 392.6 L653.1 396.5 L653.6 394.4 L654.0 394.4 L654.4 392.2 L654.9 394.1 L655.3 397.5 L655.7 395.0 L656.2 395.7 L656.6 395.3 L657.0 392.8 L657.5 397.2 L657.9 394.5 L658.3 394.5 L658.8 394.0 L659.2 395.1 L659.6 393.9 L660.0 392.8 L660.5 395.2 L660.9 391.8 L661.3 391.4 L661.8 393.1 L662.2 394.4 L662.6 391.6 L663.1 392.0 L663.5 394.0 L663.9 393.0 L664.4 392.1 L664.8 390.8 L665.2 392.5 L665.7 390.2 L666.1 392.4 L666.5 394.7 L666.9 389.3 L667.4 392.5 L667.8 390.0 L668.2 393.6 L668.7 389.7 L669.1 394.6 L669.5 385.9 L670.0 389.8 L670.4 391.8 L670.8 394.5 L671.3 394.3 L671.7 390.8 L672.1 389.8 L672.6 390.7 L673.0 395.3 L673.4 393.1 L673.9 396.4 L674.3 393.4 L674.7 391.9 L675.1 392.7 L675.6 394.2 L676.0 394.2 L676.4 393.2 L676.9 394.3 L677.3 393.2 L677.7 392.6 L678.2 393.5 L678.6 392.0 L679.0 390.6 L679.5 392.7 L679.9 392.9 L680.3 394.6 L680.8 391.6 L681.2 393.5 L681.6 393.1 L682.0 393.5 L682.5 392.1 L682.9 395.7 L683.3 392.2 L683.8 390.3 L684.2 389.6 L684.6 392.7 L685.1 393.8 L685.5 392.0 L685.9 391.6 L686.4 392.1 L686.8 391.2 L687.2 392.3 L687.7 390.9 L688.1 389.5 L688.5 393.7 L688.9 392.7 L689.4 392.8 L689.8 392.7 L690.2 392.9 L690.7 394.5 L691.1 392.1 L691.5 393.0 L692.0 393.8 L692.4 394.2 L692.8 394.9 L693.3 394.1 L693.7 392.6 L694.1 394.2 L694.6 395.8 L695.0 392.8 L695.4 395.9 L695.9 395.6 L696.3 394.1 L696.7 395.9 L697.1 392.8 L697.6 394.2 L698.0 393.4 L698.4 394.8 L698.9 394.5 L699.3 393.3 L699.7 394.9 L700.2 394.6 L700.6 395.1 L701.0 393.8 L701.5 390.3 L701.9 394.0 L702.3 393.0 L702.8 392.2 L703.2 390.8 L703.6 393.8 L704.0 393.1 L704.5 390.5 L704.9 392.9 L705.3 391.3 L705.8 392.0 L706.2 392.6 L706.6 391.3 L707.1 392.9 L707.5 394.0 L707.9 391.5 L708.4 390.1 L708.8 393.0 L709.2 391.5 L709.7 392.2 L710.1 392.6 L710.5 394.3 L710.9 392.1 L711.4 391.5 L711.8 391.5 L712.2 395.2 L712.7 394.8 L713.1 393.1 L713.5 392.0 L714.0 390.6 L714.4 392.9 L714.8 391.2 L715.3 392.8 L715.7 393.7 L716.1 391.9 L716.6 393.2 L717.0 391.0 L717.4 391.7 L717.8 392.0 L718.3 392.8 L718.7 393.5 L719.1 392.1 L719.6 392.1 L720.0 393.1 L720.4 394.9 L720.9 391.7 L721.3 394.4 L721.7 393.2 L722.2 393.6 L722.6 391.8 L723.0 394.5 L723.5 392.6 L723.9 392.9 L724.3 395.1 L724.8 394.1 L725.2 394.0 L725.6 392.3 L726.0 392.4 L726.5 391.8 L726.9 393.2 L727.3 393.8 L727.8 391.9 L728.2 394.6 L728.6 392.2 L729.1 390.5 L729.5 391.9 L729.9 395.9 L730.4 394.3 L730.8 393.6 L731.2 393.7 L731.7 394.7 L732.1 394.1 L732.5 392.4 L732.9 393.6 L733.4 391.2 L733.8 391.8 L734.2 393.5 L734.7 393.7 L735.1 392.9 L735.5 391.3 L736.0 392.8 L736.4 394.0 L736.8 393.5 L737.3 393.6 L737.7 395.6 L738.1 394.1 L738.6 392.8 L739.0 392.7 L739.4 392.1 L739.8 389.8 L740.3 393.1 L740.7 394.2 L741.1 392.9 L741.6 393.9" stroke="#bcbd22" stroke-width="1.9"/>
<path d="M497.5 453.3V115.4" stroke="#008000" stroke-width="1.3" stroke-dasharray="4.73 2.04" stroke-dashoffset="0.00"/>
<path d="M742.5 453.3V115.4" stroke="#008000" stroke-width="1.3" stroke-dasharray="4.73 2.04" stroke-dashoffset="0.00"/>
</g>
<rect x="443.6" y="115.4" width="454.8" height="337.9" fill="none" stroke="#000" stroke-width="1.1"/>
<path d="M493.70 453.3v8.2M547.62 453.3v8.2M601.54 453.3v8.2M655.46 453.3v8.2M709.38 453.3v8.2M763.30 453.3v8.2M817.22 453.3v8.2M871.14 453.3v8.2M443.6 443.86h-8.2M443.6 394.80h-8.2M443.6 345.74h-8.2M443.6 296.68h-8.2M443.6 247.62h-8.2M443.6 198.56h-8.2M443.6 149.50h-8.2" stroke="#000" stroke-width="1.1" fill="none"/>
<rect x="692.4" y="119.8" width="201.6" height="50.8" rx="2.4" fill="#fff" fill-opacity="0.8" stroke="#cccccc" stroke-width="1.1"/>
<path d="M695.4 128.0H717.9" stroke="#1f77b4" stroke-width="1.8"/>
<path d="M695.4 143.4H717.9" stroke="#7f7f7f" stroke-width="1.8"/>
<path d="M695.4 158.8H717.9" stroke="#bcbd22" stroke-width="1.8"/>
</svg>
<span class="t" id="title" style="left:431.48px;top:6.00px;font-size:12.3px;letter-spacing:-0.150px;color:#dfdbd2;font-weight:bold;">EMU00020884-1</span>
<span class="t" id="tbfit" style="left:396.42px;top:38.00px;font-size:13px;letter-spacing:0.192px;color:#0c0c0c;">Fit</span>
<span class="t" id="tbsuper" style="left:435.17px;top:38.00px;font-size:13px;letter-spacing:0.337px;color:#0c0c0c;">Superplot</span>
<span class="t" id="fitfn" style="left:3.14px;top:66.00px;font-size:13px;letter-spacing:0.234px;color:#0c0c0c;">Fit Function (Chi-sq = 1.42681, success)</span>
<span class="t" id="status" style="left:8.00px;top:92.00px;font-size:13px;letter-spacing:0.285px;color:#0c0c0c;">Status:</span>
<span class="t" id="success" style="left:54.22px;top:92.00px;font-size:13px;letter-spacing:0.018px;color:#128a12;">success</span>
<span class="t" id="bfit" style="left:50.61px;top:117.00px;font-size:13px;letter-spacing:0.182px;color:#0c0c0c;">Fit</span>
<span class="t" id="bdisp" style="left:153.76px;top:117.00px;font-size:13px;letter-spacing:0.130px;color:#0c0c0c;">Display</span>
<span class="t" id="bsetup" style="left:275.74px;top:117.00px;font-size:13px;letter-spacing:0.169px;color:#0c0c0c;">Setup</span>
<span class="t" id="hprop" style="left:11.14px;top:165.00px;font-size:13px;letter-spacing:0.262px;color:#0c0c0c;">Property</span>
<span class="t" id="hval" style="left:177.00px;top:165.00px;font-size:13px;letter-spacing:0.378px;color:#0c0c0c;">Value</span>
<span class="t" id="rfunc" style="left:32.27px;top:184.00px;font-size:13px;letter-spacing:0.191px;color:#0c0c0c;">Functions</span>
<span class="t" id="rtype" style="left:51.60px;top:203.00px;font-size:13px;letter-spacing:0.522px;color:#0c0c0c;">Type</span>
<span class="t" id="vtype" style="left:178.00px;top:203.00px;font-size:13px;letter-spacing:0.232px;color:#0c0c0c;">CompositeFunction</span>
<span class="t" id="rnum" style="left:52.14px;top:222.00px;font-size:13px;letter-spacing:0.295px;color:#0c0c0c;">NumDeriv</span>
<span class="t" id="vnum" style="left:198.14px;top:222.00px;font-size:13px;letter-spacing:-0.200px;color:#0c0c0c;">False</span>
<span class="t" id="rf0" style="left:51.85px;top:241.00px;font-size:13px;letter-spacing:0.150px;color:#0c0c0c;">f0-ExpDecay</span>
<span class="t" id="rf1" style="left:51.85px;top:260.00px;font-size:13px;letter-spacing:-0.068px;color:#ffffff;">f1-GausOsc</span>
<span class="t" id="rset" style="left:32.18px;top:279.00px;font-size:13px;letter-spacing:0.325px;color:#0c0c0c;">Settings</span>
<span class="t" id="rws" style="left:52.27px;top:298.00px;font-size:13px;letter-spacing:0.169px;color:#0c0c0c;">Workspace</span>
<span class="t" id="vws" style="left:178.14px;top:298.00px;font-size:13px;letter-spacing:0.076px;color:#0c0c0c;">EMU00020884</span>
<span class="t" id="rwi" style="left:52.27px;top:317.00px;font-size:13px;letter-spacing:0.190px;color:#0c0c0c;">Workspace Index</span>
<span class="t" id="vwi" style="left:178.38px;top:317.00px;font-size:13px;letter-spacing:0.300px;color:#0c0c0c;">5</span>
<span class="t" id="rsx" style="left:52.00px;top:336.00px;font-size:13px;letter-spacing:0.284px;color:#0c0c0c;">StartX</span>
<span class="t" id="vsx" style="left:178.36px;top:336.00px;font-size:13px;letter-spacing:0.292px;color:#0c0c0c;">0.154163</span>
<span class="t" id="rex" style="left:52.14px;top:355.00px;font-size:13px;letter-spacing:-0.370px;color:#0c0c0c;">EndX</span>
<span class="t" id="vex" style="left:177.94px;top:355.00px;font-size:13px;letter-spacing:0.360px;color:#0c0c0c;">9.205641</span>
<span class="t" id="rout" style="left:51.92px;top:374.00px;font-size:13px;letter-spacing:0.529px;color:#0c0c0c;">Output</span>
<span class="t" id="vout" style="left:178.14px;top:374.00px;font-size:13px;letter-spacing:0.076px;color:#0c0c0c;">EMU00020884</span>
<span class="t" id="rmin" style="left:52.14px;top:393.00px;font-size:13px;letter-spacing:0.291px;color:#0c0c0c;clip-path:inset(-5px -5px 4.00px -5px);">Minimizer</span>
<span class="t" id="vmin" style="left:178.14px;top:393.00px;font-size:13px;letter-spacing:0.285px;color:#0c0c0c;clip-path:inset(-5px -5px 4.00px -5px);">Levenberg-Marquardt</span>
<span class="t" id="wsl" style="left:8.79px;top:411.00px;font-size:13px;letter-spacing:0.062px;color:#0c0c0c;">Workspaces</span>
<span class="t" id="ws1" style="left:12.14px;top:433.00px;font-size:13px;letter-spacing:0.159px;color:#0c0c0c;">EMU00020884_NormalisedCovarianceMatrix</span>
<span class="t" id="ws2" style="left:12.14px;top:448.00px;font-size:13px;letter-spacing:0.071px;color:#0c0c0c;">EMU00020884_Parameters</span>
<span class="t" id="ws3" style="left:12.14px;top:463.00px;font-size:13px;letter-spacing:0.057px;color:#0c0c0c;">EMU00020884_Workspace</span>
<span class="t" id="ptitle" style="left:615.56px;top:95.00px;font-size:15.6px;letter-spacing:0.591px;color:#000;">EMU00020884</span>
<span class="t" id="leg1" style="left:725.08px;top:124.00px;font-size:10.9px;letter-spacing:0.199px;color:#000;">EMU00020884: spec 6</span>
<span class="t" id="leg2" style="left:725.08px;top:140.00px;font-size:10.9px;letter-spacing:0.124px;color:#000;">EMU00020884_Workspace: Calc</span>
<span class="t" id="leg3" style="left:725.08px;top:156.00px;font-size:10.9px;letter-spacing:0.183px;color:#000;">EMU00020884_Workspace: Diff</span>
<span class="t" id="xt0" style="left:489.56px;top:466.00px;font-size:12.9px;letter-spacing:0.300px;color:#000;">0</span>
<span class="t" id="xt2" style="left:544.08px;top:466.00px;font-size:12.9px;letter-spacing:0.300px;color:#000;">2</span>
<span class="t" id="xt4" style="left:598.00px;top:466.00px;font-size:12.9px;letter-spacing:0.300px;color:#000;">4</span>
<span class="t" id="xt6" style="left:651.64px;top:466.00px;font-size:12.9px;letter-spacing:0.300px;color:#000;">6</span>
<span class="t" id="xt8" style="left:705.77px;top:466.00px;font-size:12.9px;letter-spacing:0.300px;color:#000;">8</span>
<span class="t" id="xt10" style="left:756.08px;top:466.00px;font-size:12.9px;letter-spacing:0.088px;color:#000;">10</span>
<span class="t" id="xt12" style="left:810.00px;top:466.00px;font-size:12.9px;letter-spacing:0.134px;color:#000;">12</span>
<span class="t" id="xt14" style="left:863.82px;top:466.00px;font-size:12.9px;letter-spacing:0.300px;color:#000;">14</span>
<span class="t" id="yt-10000" style="left:381.86px;top:439.00px;font-size:12.9px;letter-spacing:0.980px;color:#000;">−10000</span>
<span class="t" id="yt0" style="left:422.75px;top:390.00px;font-size:12.9px;letter-spacing:0.300px;color:#000;">0</span>
<span class="t" id="yt10000" style="left:392.15px;top:341.00px;font-size:12.9px;letter-spacing:0.529px;color:#000;">10000</span>
<span class="t" id="yt20000" style="left:391.76px;top:292.00px;font-size:12.9px;letter-spacing:0.616px;color:#000;">20000</span>
<span class="t" id="yt30000" style="left:391.92px;top:243.00px;font-size:12.9px;letter-spacing:0.581px;color:#000;">30000</span>
<span class="t" id="yt40000" style="left:391.80px;top:194.00px;font-size:12.9px;letter-spacing:0.608px;color:#000;">40000</span>
<span class="t" id="yt50000" style="left:391.83px;top:145.00px;font-size:12.9px;letter-spacing:0.599px;color:#000;">50000</span>
<span class="t" id="xlabel" style="left:640.17px;top:486.00px;font-size:12.9px;letter-spacing:0.833px;color:#000;">Time (<i>μs</i>)</span>
</body></html>
